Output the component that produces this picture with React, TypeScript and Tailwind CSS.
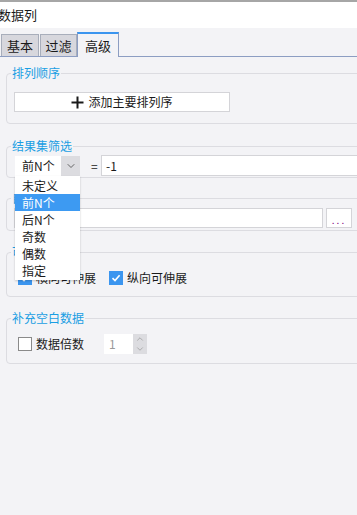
import { ChevronDown, ChevronUp } from "lucide-react";

const font = { fontFamily: '"Microsoft YaHei", "Noto Sans CJK SC", "Noto Sans", sans-serif' };

const options = ["未定义", "前N个", "后N个", "奇数", "偶数", "指定"];

function Group({ label, children, className }: { label: string; children: React.ReactNode; className: string }) {
    return (
        <fieldset className={`ml-[6px] w-[420px] rounded-[4px] border border-[#dcdce1] ${className}`}>
            <legend className="ml-[4px] px-[1px] text-[12px] leading-[14px] text-[#1a9ee3]">{label}</legend>
            {children}
        </fieldset>
    );
}

function CheckMark() {
    return (
        <span className="flex h-[14px] w-[14px] items-center justify-center bg-[#3b95ef]">
            <svg width="10" height="10" viewBox="0 0 10 10">
                <path d="M1.5 5.2 L4 7.6 L8.6 2.2" fill="none" stroke="white" strokeWidth="1.6" />
            </svg>
        </span>
    );
}

export default function App() {
    return (
        <div className="relative h-[515px] w-full overflow-hidden bg-[#f3f3f6] text-[12px] text-[#1a1a1a]" style={font}>
            <div className="h-[2px] bg-[#a6a6a6]" />
            <div className="-ml-[2px] h-[26px] bg-white leading-[26px] text-[13px]">数据列</div>

            {/* tabs */}
            <div className="mt-[4px] flex h-[25px] items-end border-b border-[#8c9dc2] pl-[1px]">
                <div className="flex h-[22px] w-[38px] items-center justify-center border border-b-0 border-[#a8aebb] bg-[#d7d7dd] text-[13px]">基本</div>
                <div className="ml-[1px] flex h-[22px] w-[37px] items-center justify-center border border-b-0 border-[#a8aebb] bg-[#d7d7dd] text-[13px]">过滤</div>
                <div className="-mb-px flex h-[25px] w-[42px] items-center justify-center border-x border-t-2 border-[#8c9dc2] border-t-[#3b95ef] bg-[#f3f3f6] text-[13px]">高级</div>
            </div>

            <Group label="排列顺序" className="mt-[9px] pb-[11px]">
                <button className="ml-[7px] mt-[12px] flex h-[20px] w-[216px] items-center justify-center gap-[4px] border border-[#d4d4d8] bg-white text-[12px]">
                    <svg width="13" height="13" viewBox="0 0 13 13">
                        <path d="M6.5 0.5 V12.5 M0.5 6.5 H12.5" stroke="#1a1a1a" strokeWidth="2" />
                    </svg>
                    添加主要排列序
                </button>
            </Group>

            <Group label="结果集筛选" className="mt-[15px] pb-[1px]">
                <div className="mt-[2px] flex items-center">
                    <div className="relative ml-[8px] flex h-[20px] w-[65px] items-center bg-white">
                        <span className="pl-[7px]">前N个</span>
                        <span className="ml-auto flex h-full w-[19px] items-center justify-center bg-[#dcdce0]">
                            <ChevronDown size={12} strokeWidth={1.6} color="#444" />
                        </span>
                        {/* open dropdown */}
                        <div className="absolute left-0 top-[20px] z-10 w-[65px] bg-white py-[1px] shadow-[0_1px_2px_rgba(0,0,0,0.2)]">
                            {options.map((o) => (
                                <div
                                    key={o}
                                    className={`h-[17px] pl-[7px] leading-[17px] text-[12px] ${o === "前N个" ? "bg-[#3d9af2] text-white" : ""}`}
                                >
                                    {o}
                                </div>
                            ))}
                        </div>
                    </div>
                    <span className="ml-[11px] w-[8px]">=</span>
                    <div className="ml-[2px] flex h-[21px] flex-1 items-center border border-[#d4d4d8] bg-white pl-[4px]">-1</div>
                </div>
            </Group>

            <Group label="自定义显示" className="mt-[13px] pb-[2px]">
                <div className="mt-[3px] flex items-center">
                    <div className="ml-[7px] h-[20px] w-[309px] border border-[#d4d4d8] bg-white" />
                    <div className="ml-[3px] flex h-[20px] w-[26px] items-end justify-center border border-[#d4d4d8] bg-white pb-[2px] text-[10px] leading-[10px] tracking-[2px] text-[#800080]">...</div>
                </div>
            </Group>

            <Group label="可扩展性" className="mt-[14px] pb-[10px]">
                <div className="ml-[11px] mt-[11px] flex h-[16px] items-center">
                    <CheckMark />
                    <span className="ml-[4px]">横向可伸展</span>
                    <span className="ml-[13px]"><CheckMark /></span>
                    <span className="ml-[4px]">纵向可伸展</span>
                </div>
            </Group>

            <Group label="补充空白数据" className="mt-[14px] pb-[9px]">
                <div className="mt-[9px] flex h-[20px] items-center">
                    <span className="ml-[11px] h-[14px] w-[14px] border border-[#8a8a8a] bg-white" />
                    <span className="ml-[4px]">数据倍数</span>
                    <div className="ml-[20px] flex h-[20px] items-stretch">
                        <div className="flex w-[29px] items-center bg-white pl-[5px] text-[#9a9a9a]">1</div>
                        <div className="flex w-[14px] flex-col items-center justify-center bg-[#dcdce0]">
                            <ChevronUp size={10} strokeWidth={1.4} color="#888" />
                            <ChevronDown size={10} strokeWidth={1.4} color="#888" />
                        </div>
                    </div>
                </div>
            </Group>
        </div>
    );
}
